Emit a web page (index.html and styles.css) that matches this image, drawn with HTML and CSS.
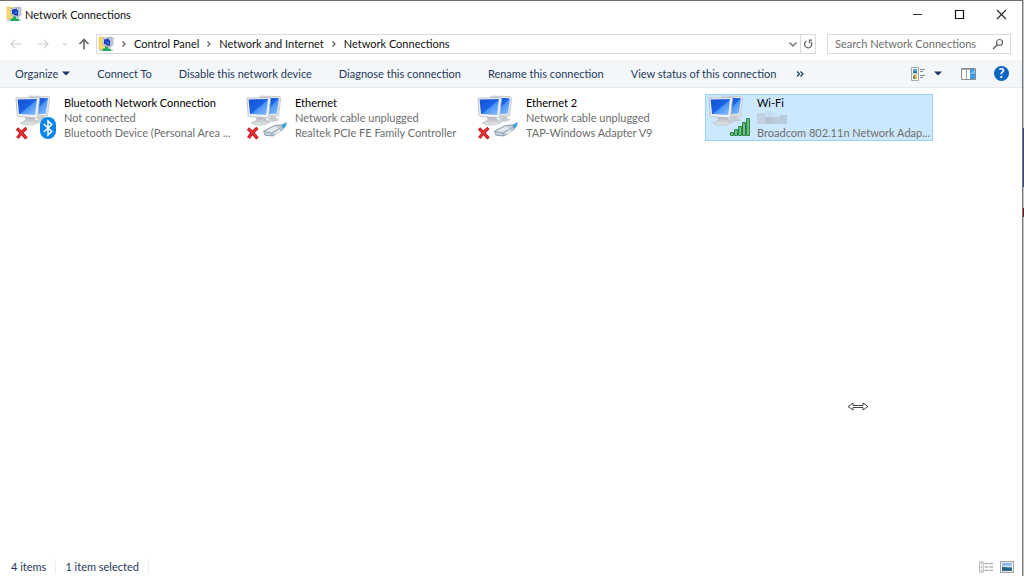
FILE: index.html
```html
<!DOCTYPE html>
<html lang="en">
<head>
    <meta charset="UTF-8">
    <meta name="viewport" content="width=device-width, initial-scale=1.0">
    <title>Network Connections</title>
    <link rel="stylesheet" href="styles.css">
</head>
<body>
    <!-- Shared icons -->
    <svg class="sprite" aria-hidden="true">
        <defs>
            <linearGradient id="screen" x1="0" y1="0" x2="1" y2="1">
                <stop offset="0" stop-color="#1450d2"/>
                <stop offset="0.5" stop-color="#1a63e6"/>
                <stop offset="0.55" stop-color="#4b93f5"/>
                <stop offset="1" stop-color="#8fc4ff"/>
            </linearGradient>
            <linearGradient id="stand" x1="0" y1="0" x2="0" y2="1">
                <stop offset="0" stop-color="#a9adb2"/>
                <stop offset="1" stop-color="#e6e8ea"/>
            </linearGradient>
            <linearGradient id="sky" x1="0" y1="0" x2="0" y2="1">
                <stop offset="0" stop-color="#5e9be0"/>
                <stop offset="0.5" stop-color="#dcecf8"/>
                <stop offset="0.6" stop-color="#2c6ca0"/>
                <stop offset="1" stop-color="#39698f"/>
            </linearGradient>
        </defs>
        <symbol id="folder" viewBox="0 0 16 16">
            <path d="M1 1h4l1 1h2v11H1z" fill="#f6d86b" stroke="#e5c04c" stroke-width="0.6"/>
            <path d="M5 2L13 .6l2.500 1V9L12 12l-6-1z" fill="#b9c4d4"/>
            <path d="M5 2.600l7-1.400v8l-7-.6z" fill="#dbe4f2" stroke="#8496b5" stroke-width="0.5"/>
            <path d="M6 3.400l5-.8v6L6 8z" fill="#1d3fc9"/>
            <path d="M8 5l4-.7v5.400L8 9z" fill="#153099"/>
            <path d="M8.600 5.700l2.600-.4v3l-2.600-.3z" fill="#3c74ea"/>
            <path d="M7 10.500h3v2h2.500l1 2.500H4l1-2.500h2z" fill="#1fa862"/>
            <path d="M1 14h3M13.500 14H15" stroke="#9aa3a8"/>
        </symbol>
        <symbol id="computers" viewBox="0 0 36 32">
            <path d="M25 20l4-1 1 4 4 2-7 2-5-2z" fill="#c9ccd0"/>
            <path d="M14 1L34 1.600l.8 1L32.500 21 16 21z" fill="#e4e7ea" stroke="#b9bdc2" stroke-width="0.7"/>
            <path d="M16 2.600l17 .6-2.200 15.500L16 19z" fill="url(#screen)"/>
            <path d="M10 21h9l1 4 5 2-7 3H9l-4-2 6-3z" fill="url(#stand)" stroke="#aaaeb3" stroke-width="0.5"/>
            <path d="M1 3l22.500-.4 1 1-2 19.400L3 21.500l-.8-1z" fill="#f1f3f5" stroke="#b2b6bc" stroke-width="0.8"/>
            <path d="M2.600 4.400L22 4l-1.700 16L4 19z" fill="url(#screen)"/>
        </symbol>
        <symbol id="cross" viewBox="0 0 14 14">
            <path d="M2 2.500Q6 6 11.500 12.500M11.500 2Q6 6 2.500 12" fill="none" stroke="#bd1218" stroke-width="3.4"/>
            <path d="M2.500 3Q6 6 11.200 12M11 2.500Q6 6 2.800 11.500" fill="none" stroke="#e5323a" stroke-width="1.8"/>
        </symbol>
        <symbol id="bluetooth" viewBox="0 0 18 24">
            <rect x="1" y="1" width="16" height="22" rx="8" fill="#0a84ee"/>
            <path d="M4.800 8l8 7.500L9 19V5l3.800 3.500-8 7.500" fill="none" stroke="#fff" stroke-width="1.5"/>
        </symbol>
        <symbol id="cable" viewBox="0 0 26 16">
            <path d="M17 4l8-4-1.500 5-4 3z" fill="#39a3dc"/>
            <path d="M1.500 9l11-5.500 7-.5 2 4L11 14l-8-.8z" fill="#c5d2dd" stroke="#7d8f9f" stroke-width="0.8"/>
            <path d="M2 9.500l8 1.500L20.500 5M10 11v3" fill="none" stroke="#8496a5" stroke-width="0.7"/>
            <path d="M5 8.500l5 1M7 7.500l5 1M9 6.500l5 1M11 5.500l5 1" stroke="#f7fafc"/>
            <path d="M13 10.500l5-3v2l-5 3z" fill="#eef3f7"/>
        </symbol>
        <symbol id="signal" viewBox="0 0 20 18">
            <path d="M.5 14.500h3v3h-3zM4.500 11.500h3v6h-3zM8.500 8.500h3v9h-3zM12.500 4.500h3v13h-3zM16.500 .5h3v17h-3z" fill="#6cbb82" stroke="#2c8849"/>
        </symbol>
        <symbol id="crumb" viewBox="0 0 6 8">
            <path d="M1.500 1.500L4 4 1.500 6.500" fill="none" stroke="#5c5c5c" stroke-width="1.2"/>
        </symbol>
        <symbol id="caret" viewBox="0 0 8 5">
            <path d="M0 .5h8L4 4.500z" fill="#1c3763"/>
        </symbol>
    </svg>

    <main class="window">
        <header class="titlebar">
            <svg class="app-icon"><use href="#folder"/></svg>
            <h1>Network Connections</h1>
            <div class="window-buttons">
                <button type="button" aria-label="Minimize"><svg viewBox="0 0 11 11"><path d="M1 5.500h9" stroke="#333"/></svg></button>
                <button type="button" aria-label="Maximize"><svg viewBox="0 0 11 11"><path d="M1.500 1.500h8v8h-8z" fill="none" stroke="#111" stroke-width="1.2"/></svg></button>
                <button type="button" aria-label="Close"><svg viewBox="0 0 11 11"><path d="M1 1l9 9M10 1l-9 9" stroke="#222" stroke-width="1.1"/></svg></button>
            </div>
        </header>

        <nav class="navbar" aria-label="Navigation">
            <div class="history">
                <button type="button" aria-label="Back" disabled><svg viewBox="0 0 12 12"><path d="M1 6h10.500M5 2L1 6l4 4" fill="none" stroke="#cfcfcf" stroke-width="1.2"/></svg></button>
                <button type="button" aria-label="Forward" disabled><svg viewBox="0 0 12 12"><path d="M.5 6H11M7 2l4 4-4 4" fill="none" stroke="#cfcfcf" stroke-width="1.2"/></svg></button>
                <button type="button" class="recent" aria-label="Recent locations" disabled><svg viewBox="0 0 6 6"><path d="M1 2l2 2 2-2" fill="none" stroke="#bdbdbd"/></svg></button>
                <button type="button" aria-label="Up"><svg viewBox="0 0 12 12"><path d="M6 11.500V1.500M1.500 6L6 1.500 10.500 6" fill="none" stroke="#666" stroke-width="1.6"/></svg></button>
            </div>
            <div class="address">
                <svg class="app-icon"><use href="#folder"/></svg>
                <svg class="crumb"><use href="#crumb"/></svg>
                <a href="#">Control Panel</a>
                <svg class="crumb"><use href="#crumb"/></svg>
                <a href="#">Network and Internet</a>
                <svg class="crumb"><use href="#crumb"/></svg>
                <a href="#">Network Connections</a>
                <button type="button" class="previous" aria-label="Previous locations"><svg viewBox="0 0 10 10"><path d="M1.500 3.500L5 7l3.500-3.500" fill="none" stroke="#777" stroke-width="1.5"/></svg></button>
                <button type="button" class="refresh" aria-label="Refresh"><svg viewBox="0 0 10 10"><path d="M3.500 2A3.600 3.600 0 1 0 8 3M9 1.200H6.500V4" fill="none" stroke="#666" stroke-width="1.3"/></svg></button>
            </div>
            <div class="search">
                <input type="text" placeholder="Search Network Connections" aria-label="Search Network Connections">
                <svg viewBox="0 0 12 12"><circle cx="7.500" cy="4.500" r="3" fill="none" stroke="#666" stroke-width="1.2"/><path d="M5.200 6.800L1 11" stroke="#666" stroke-width="1.5"/></svg>
            </div>
        </nav>

        <div class="commands" role="toolbar" aria-label="Commands">
            <button type="button">Organize <svg class="caret"><use href="#caret"/></svg></button>
            <button type="button">Connect To</button>
            <button type="button">Disable this network device</button>
            <button type="button">Diagnose this connection</button>
            <button type="button">Rename this connection</button>
            <button type="button">View status of this connection</button>
            <button type="button" class="more" aria-label="More commands"><svg viewBox="0 0 8 8"><path d="M1 1.500L3.500 4 1 6.500M4.500 1.500L7 4 4.500 6.500" fill="none" stroke="#1c3763" stroke-width="1.2"/></svg></button>
            <div class="view-tools">
                <button type="button" aria-label="Change your view">
                    <svg class="view" viewBox="0 0 15 14">
                        <path d="M.5 .5h7v13h-7zM.5 7h7" fill="#fff" stroke="#a9a9a9"/>
                        <path d="M2 2h4v4H2z" fill="#5b9fdc"/><path d="M2 4.500h4V6H2z" fill="#246b86"/>
                        <path d="M2 8h4v4H2z" fill="#e8b868"/><path d="M2 10l2-2v4H2z" fill="#588c4c"/>
                        <path d="M9 2.500h5M9 4.500h3M9 8.500h5M9 10.500h3" stroke="#888"/>
                    </svg>
                </button>
                <button type="button" aria-label="More view options"><svg class="caret"><use href="#caret"/></svg></button>
                <button type="button" aria-label="Show the preview pane">
                    <svg class="pane" viewBox="0 0 15 12">
                        <path d="M.5 .5h14v11H.5z" fill="#fff" stroke="#8c8c8c"/>
                        <path d="M1 1.500h13M5.500 1v10" stroke="#a5a5a5"/>
                        <path d="M9 1h5v10H9z" fill="#3e9ae6"/><path d="M9 6l5-5v5z" fill="#75baf1"/>
                    </svg>
                </button>
                <button type="button" class="help" aria-label="Get help">?</button>
            </div>
        </div>

        <ul class="connections">
            <li class="connection">
                <div class="device">
                    <svg class="computers"><use href="#computers"/></svg>
                    <svg class="cross"><use href="#cross"/></svg>
                    <svg class="bluetooth"><use href="#bluetooth"/></svg>
                </div>
                <div class="details">
                    <h2>Bluetooth Network Connection</h2>
                    <p>Not connected</p>
                    <p>Bluetooth Device (Personal Area ...</p>
                </div>
            </li>
            <li class="connection">
                <div class="device">
                    <svg class="computers"><use href="#computers"/></svg>
                    <svg class="cross"><use href="#cross"/></svg>
                    <svg class="cable"><use href="#cable"/></svg>
                </div>
                <div class="details">
                    <h2>Ethernet</h2>
                    <p>Network cable unplugged</p>
                    <p>Realtek PCIe FE Family Controller</p>
                </div>
            </li>
            <li class="connection">
                <div class="device">
                    <svg class="computers"><use href="#computers"/></svg>
                    <svg class="cross"><use href="#cross"/></svg>
                    <svg class="cable"><use href="#cable"/></svg>
                </div>
                <div class="details">
                    <h2>Ethernet 2</h2>
                    <p>Network cable unplugged</p>
                    <p>TAP-Windows Adapter V9</p>
                </div>
            </li>
            <li class="connection selected">
                <div class="device">
                    <svg class="computers"><use href="#computers"/></svg>
                    <svg class="signal"><use href="#signal"/></svg>
                </div>
                <div class="details">
                    <h2>Wi-Fi</h2>
                    <p class="network-name"><svg viewBox="0 0 30 15"><path d="M0 3h8v11H0z" fill="#c3d2e3"/><path d="M8 1h7v6H8z" fill="#c8dbef"/><path d="M8 7h7v7H8z" fill="#b7c4d5"/><path d="M15 7h8v7h-8z" fill="#becbdc"/><path d="M15 3h7v4h-7z" fill="#cbe0f5"/><path d="M23 5h7v9h-7z" fill="#b7cbdf"/></svg></p>
                    <p>Broadcom 802.11n Network Adap...</p>
                </div>
            </li>
        </ul>

        <footer class="statusbar">
            <span>4 items</span>
            <span>1 item selected</span>
            <div class="layouts">
                <button type="button" aria-label="Details view">
                    <svg viewBox="0 0 15 12">
                        <path d="M.5 .5h4v11h-4z" fill="#fff" stroke="#aaa"/>
                        <path d="M2 2.500h1M2 6h1" stroke="#558"/><path d="M2 9.500h1" stroke="#c44"/>
                        <path d="M6 2.500h4M11 2.500h4M6 6h4M11 6h4M6 9.500h4M11 9.500h4" stroke="#888"/>
                    </svg>
                </button>
                <button type="button" aria-label="Large icons view">
                    <svg viewBox="0 0 13 11"><path d="M.5 .5h12v10H.5z" fill="#fff" stroke="#a5a5a5"/><path d="M2 2h9v7H2z" fill="url(#sky)"/><path d="M2 5l3 1 6 1v2H2z" fill="#266486"/></svg>
                </button>
            </div>
        </footer>
    </main>

    <!-- Slice of the window behind -->
    <aside class="behind" aria-hidden="true"><i class="blue"></i><i class="red"></i></aside>

    <svg class="cursor" viewBox="0 0 22 9" aria-hidden="true">
        <path d="M1 4.500L6 1v2.500h10V1l5 3.500L16 8V5.500H6V8z" fill="#fff" stroke="#333" stroke-width="0.9"/>
    </svg>
</body>
</html>
```
FILE: styles.css
```css
* {
    box-sizing: border-box;
}
body {
    margin: 0;
    height: 100vh;
    display: flex;
    overflow: hidden;
    background: #fff;
    color: #111;
    font-family: Lato, "Open Sans", sans-serif;
    font-size: 11px;
    line-height: 15px;
}
h1, h2, p, ul {
    margin: 0;
    padding: 0;
    font-size: 11px;
    font-weight: normal;
}
button {
    display: flex;
    align-items: center;
    justify-content: center;
    padding: 0;
    border: 0;
    background: none;
    color: inherit;
    font: inherit;
    white-space: nowrap;
}
svg {
    display: block;
    flex: none;
}
.sprite {
    position: absolute;
    width: 0;
    height: 0;
}
.window {
    flex: 1;
    min-width: 0;
    display: flex;
    flex-direction: column;
    border-top: 1px solid #6e6e6e;
    border-right: 1px solid #777;
}
.app-icon {
    width: 16px;
    height: 16px;
}

/* Title bar */
.titlebar {
    display: flex;
    align-items: center;
    height: 26px;
    padding-left: 6px;
    gap: 3px;
}
.window-buttons {
    display: flex;
    margin-left: auto;
}
.window-buttons button {
    width: 42px;
    height: 26px;
}
.window-buttons svg {
    width: 11px;
    height: 11px;
}

/* Address row */
.navbar {
    display: flex;
    align-items: center;
    height: 33px;
    padding: 0 11px 0 10px;
}
.history {
    display: flex;
    gap: 15px;
    padding-right: 6px;
}
.history svg {
    width: 12px;
    height: 12px;
}
.history .recent {
    width: 6px;
    margin: 0 -5px 0 -2px;
}
.history .recent svg {
    width: 6px;
    height: 6px;
}
.address {
    flex: 1;
    display: flex;
    align-items: center;
    height: 20px;
    margin-right: 11px;
    padding-left: 1px;
    gap: 7px;
    border: 1px solid #d9d9d9;
}
.address a {
    color: #111;
    text-decoration: none;
    white-space: nowrap;
}
.crumb {
    width: 6px;
    height: 8px;
}
.address button {
    width: 15px;
    height: 18px;
}
.address button svg {
    width: 10px;
    height: 10px;
}
.address .previous {
    margin-left: auto;
}
.address .refresh {
    margin-left: -7px;
    border-left: 1px solid #d9d9d9;
}
.search {
    display: flex;
    align-items: center;
    width: 184px;
    height: 20px;
    padding: 0 6px 0 7px;
    border: 1px solid #d9d9d9;
}
.search input {
    flex: 1;
    min-width: 0;
    padding: 0;
    border: 0;
    outline: 0;
    background: none;
    font: inherit;
}
.search input::placeholder {
    color: #6d6d6d;
    opacity: 1;
}
.search svg {
    width: 12px;
    height: 12px;
}

/* Command bar */
.commands {
    display: flex;
    align-items: center;
    height: 28px;
    padding: 0 13px 0 15px;
    gap: 27px;
    border-bottom: 1px solid #e6eaee;
    background: #f4f7f9;
    color: #1e395b;
}
.commands .more {
    margin-left: -7px;
}
.more svg {
    width: 8px;
    height: 8px;
}
.caret {
    width: 8px;
    height: 5px;
    margin-left: 4px;
}
.view-tools {
    display: flex;
    align-items: center;
    margin-left: auto;
}
.view {
    width: 15px;
    height: 14px;
}
.pane {
    width: 15px;
    height: 12px;
    margin: 0 18px 0 19px;
}
.view-tools .caret {
    margin-left: 8px;
}
.help {
    width: 15px;
    height: 15px;
    border-radius: 50%;
    background: #0a66c2;
    color: #fff;
    font-size: 13px;
    font-weight: bold;
}

/* Connections */
.connections {
    flex: 1;
    display: grid;
    grid-template-columns: repeat(auto-fill, 228px);
    align-content: start;
    gap: 3px;
    padding: 6px 12px;
    list-style: none;
}
.connection {
    display: flex;
    border: 1px solid transparent;
}
.connection.selected {
    border-color: #99d1ff;
    background: #cce8ff;
}
.device {
    position: relative;
    width: 44px;
    height: 45px;
    margin-right: 7px;
}
.computers {
    width: 36px;
    height: 32px;
    margin-left: 2px;
}
.cross, .bluetooth, .cable, .signal {
    position: absolute;
    bottom: 0;
}
.cross {
    left: 2px;
    width: 14px;
    height: 14px;
}
.bluetooth {
    right: 0;
    width: 18px;
    height: 24px;
}
.cable {
    right: 0;
    bottom: 2px;
    width: 26px;
    height: 16px;
}
.signal {
    right: 0;
    bottom: 4px;
    width: 20px;
    height: 18px;
}
.details {
    flex: 1;
    min-width: 0;
    color: #6d6d6d;
    white-space: nowrap;
}
.details h2 {
    color: #000;
}
.network-name svg {
    width: 30px;
    height: 15px;
}

/* Status bar */
.statusbar {
    display: flex;
    align-items: center;
    height: 19px;
    padding: 0 8px 0 2px;
    color: #1e395b;
}
.statusbar span {
    padding: 0 9px;
    border-right: 1px solid #eee;
}
.layouts {
    display: flex;
    gap: 7px;
    margin-left: auto;
}
.layouts svg {
    width: 14px;
    height: 12px;
}

.behind {
    width: 1px;
    padding-top: 128px;
    background: #c4c4c4;
}
.behind i {
    display: block;
    height: 59px;
    background: #2d4a80;
}
.behind .red {
    height: 9px;
    margin-top: 21px;
    background: #701c1c;
}
.cursor {
    position: absolute;
    left: 847px;
    top: 402px;
    width: 22px;
    height: 9px;
}
```
